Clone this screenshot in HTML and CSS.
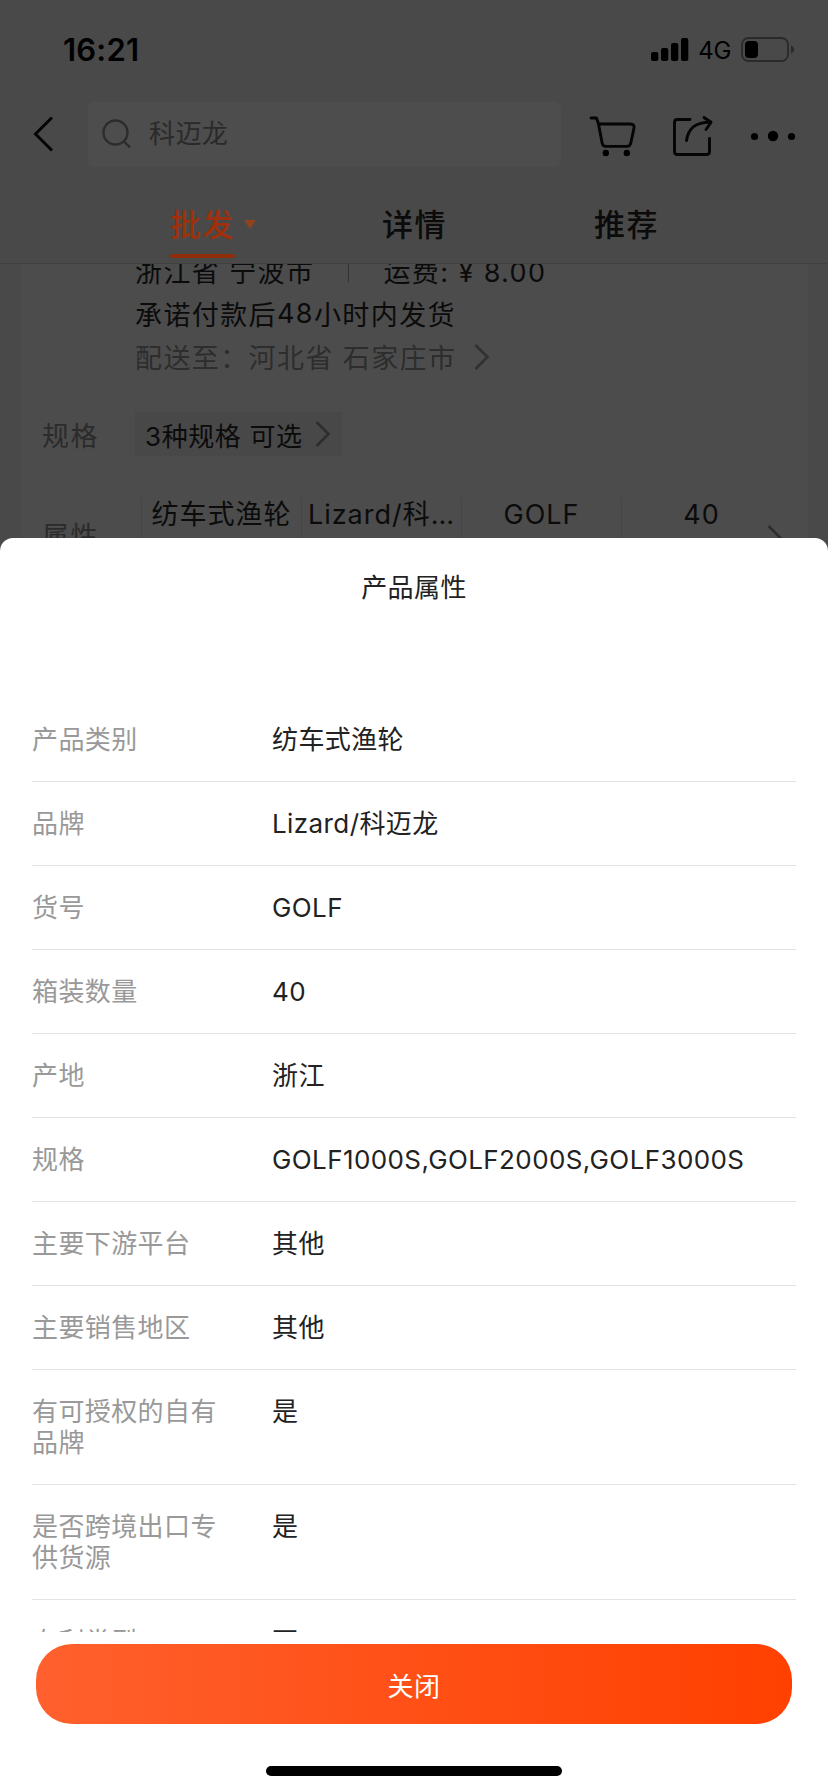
FILE: index.html
```html
<!DOCTYPE html>
<html lang="zh-CN">
<head>
<meta charset="utf-8">
<title>产品属性</title>
<link rel="stylesheet" href="styles.css">
</head>
<body>
<div class="screen">
  <header class="header">
    <div class="status">
      <span class="time">16:21</span>
      <svg class="signal" width="38" height="24" viewBox="0 0 38 24"><rect x="0" y="14" width="7.3" height="9" rx="2"/><rect x="10" y="10" width="7.3" height="13" rx="2"/><rect x="20" y="5" width="7.3" height="18" rx="2"/><rect x="30" y="0" width="7.3" height="23" rx="2"/></svg>
      <span class="net">4G</span>
      <svg class="battery" width="54" height="26" viewBox="0 0 54 26"><rect x="1" y="1" width="46" height="23" rx="6.5" fill="none" stroke="#2a2a2a" stroke-width="1.8"/><rect x="4" y="4" width="13" height="17" rx="4"/><path d="M50 8.5v8c4-1.500 4-6.500 0-8z" fill="#2a2a2a"/></svg>
    </div>
    <div class="nav">
      <svg class="back" width="24" height="38" viewBox="0 0 24 38"><path d="M20 2.500 3.500 19 20 35.500" fill="none" stroke="#050505" stroke-width="3"/></svg>
      <div class="search">
        <svg width="30" height="30" viewBox="0 0 30 30"><g fill="none" stroke="#2c2c2c" stroke-width="2.400"><circle cx="13.500" cy="13.500" r="12"/><path d="m21.500 22 6.500 6.500"/></g></svg>
        <span>科迈龙</span>
      </div>
      <svg class="tools" width="216" height="50" viewBox="0 0 216 50">
        <g fill="none" stroke="#050505" stroke-width="2.900" stroke-linecap="round" stroke-linejoin="round">
          <path d="M4 9h5.500l2 6 3.600 19q.6 3.400 4 3.400h20.700q3.400 0 4-3.400L47 19q.6-4-3.400-4H11.500"/>
          <path d="M103 10.500H90.500q-3 0-3 3v29q0 3 3 3h29q3 0 3-3V29.500"/>
          <path d="M99.500 31.500c2-13 9-18 24-18.500"/>
          <path d="m117 8.500 7 4.800-5 7.200"/>
        </g>
        <circle cx="18.800" cy="44" r="3.200"/><circle cx="39.800" cy="44" r="3.200"/>
        <circle cx="167.500" cy="27.500" r="3.600"/><circle cx="186" cy="27" r="5.200"/><circle cx="204.500" cy="27.500" r="3.600"/>
      </svg>
    </div>
    <nav class="tabs">
      <div class="tab active"><span>批发</span><i class="caret"></i></div>
      <div class="tab"><span>详情</span></div>
      <div class="tab"><span>推荐</span></div>
    </nav>
  </header>
  <main class="content">
    <section class="card">
      <div class="ship">
        <div class="line origin"><span>浙江省 宁波市</span><i class="sep"></i><span>运费: ¥ <b class="price">8.00</b></span></div>
        <div class="line promise">承诺付款后<b>48</b>小时内发货</div>
        <div class="line dest"><span>配送至：河北省 石家庄市</span><svg width="16" height="28" viewBox="0 0 16 28"><path d="m1.500 2 12 12-12 12" fill="none" stroke="#303030" stroke-width="2.500"/></svg></div>
      </div>
      <div class="spec">
        <span class="label">规格</span>
        <div class="chip"><span><b>3</b>种规格 可选</span><svg width="16" height="28" viewBox="0 0 16 28"><path d="m1.500 2 12 12-12 12" fill="none" stroke="#2d2d2d" stroke-width="2.500"/></svg></div>
      </div>
      <div class="attrs">
        <span class="label">属性</span>
        <div class="cells"><span>纺车式渔轮</span><span><b>Lizard/</b>科…</span><span class="latin">GOLF</span><span class="latin">40</span></div>
        <svg class="more" width="16" height="28" viewBox="0 0 16 28"><path d="m1.500 2 12 12-12 12" fill="none" stroke="#2d2d2d" stroke-width="2.500"/></svg>
      </div>
    </section>
  </main>
  <section class="sheet">
    <h1>产品属性</h1>
    <dl class="list">
      <div class="row"><dt>产品类别</dt><dd>纺车式渔轮</dd></div>
      <div class="row"><dt>品牌</dt><dd><span class="latin brand">Lizard/</span>科迈龙</dd></div>
      <div class="row"><dt>货号</dt><dd class="latin">GOLF</dd></div>
      <div class="row"><dt>箱装数量</dt><dd class="latin">40</dd></div>
      <div class="row"><dt>产地</dt><dd>浙江</dd></div>
      <div class="row"><dt>规格</dt><dd class="latin">GOLF1000S,GOLF2000S,GOLF3000S</dd></div>
      <div class="row"><dt>主要下游平台</dt><dd>其他</dd></div>
      <div class="row"><dt>主要销售地区</dt><dd>其他</dd></div>
      <div class="row"><dt>有可授权的自有品牌</dt><dd>是</dd></div>
      <div class="row"><dt>是否跨境出口专供货源</dt><dd>是</dd></div>
      <div class="row"><dt>专利类型</dt><dd>否</dd></div>
    </dl>
    <button class="close" type="button">关闭</button>
    <div class="home"></div>
  </section>
</div>
</body>
</html>
```
FILE: styles.css
```css
* { box-sizing: border-box; }
body { margin: 0; font-family: Inter, "Noto Sans CJK SC", sans-serif; }
b { font-weight: 400; }
svg { display: block; flex: none; }
.screen { width: 828px; height: 1792px; overflow: hidden; display: flex; flex-direction: column; background: #494949; color: #0b0b0b; }

.header { flex: none; height: 264px; background: #494949; border-bottom: 1px solid #414141; }
.status { display: flex; align-items: center; height: 100px; padding: 0 33px 0 63px; }
.time { flex: 1; font-size: 31px; font-weight: 600; line-height: 40px; letter-spacing: .2px; color: #000; }
.net { margin: 2px 10px 0 9px; font-size: 24px; line-height: 30px; color: #000; letter-spacing: -.3px; }
.nav { display: flex; align-items: center; height: 66px; margin-top: 1px; padding-left: 32px; }
.search { display: flex; align-items: center; gap: 17px; width: 473px; height: 65px; margin: 0 26px 0 32px; padding-left: 14px; border-radius: 6px; background: #4d4d4d; font-size: 26px; letter-spacing: .4px; color: #2a2a2a; }
.search span { line-height: 30px; }
.tabs { display: flex; height: 96px; padding: 0 64px 0 97px; margin-left: 0; }
.tab { position: relative; width: 212px; padding: 38px 0 0 73px; font-size: 31px; line-height: 40px; font-weight: 500; letter-spacing: 1.5px; height: 92px; white-space: nowrap; }
.active { color: #9f300b; }
.active::after { content: ""; position: absolute; left: 73px; bottom: 1px; width: 65px; height: 4px; border-radius: 2px; background: #8f2c0a; }
.caret { position: absolute; left: 147px; top: 53px; border: 6px solid transparent; border-top: 9px solid #8f4420; border-bottom: 0; }

.content { flex: none; height: 274px; overflow: hidden; padding: 0 20px 0 22px; }
.card { height: 300px; padding-left: 20px; background: #4c4c4c; }
.ship { padding-left: 93px; font-size: 27px; letter-spacing: 1.4px; }
.line { display: flex; align-items: center; height: 43px; white-space: nowrap; }
.origin { margin-top: -15px; }
.sep { width: 1px; height: 22px; margin: 0 34px 0 34px; background: #333; }
.dest { color: #2d2d2d; gap: 18px; }
.spec { display: flex; align-items: center; margin-top: 34px; height: 44px; }
.label { width: 93px; font-size: 27px; letter-spacing: 1.4px; color: #2b2b2b; flex: none; }
.chip { display: flex; align-items: center; gap: 12px; width: 207px; height: 44px; padding-left: 10px; background: #484848; font-size: 26px; letter-spacing: .6px; white-space: nowrap; }
.attrs { display: flex; padding-top: 42px; }
.attrs .label { padding-top: 17px; line-height: 44px; }
.cells { display: grid; grid-template-columns: repeat(4, 160px); padding-left: 6px; font-size: 27px; letter-spacing: 1px; text-align: center; }
.cells span { height: 60px; line-height: 34px; border-left: 1px solid #454545; white-space: nowrap; }
.more { margin: 26px 0 0 -14px; }

.sheet { flex: 1; min-height: 0; display: flex; flex-direction: column; background: #fff; border-radius: 13px 13px 0 0; color: #222; box-shadow: 0 14px 0 14px #494949; clip-path: none; font-size: 26px; letter-spacing: .4px; }
.sheet { box-shadow: none; }
h1 { flex: none; margin: 0; height: 160px; padding-top: 34px; font-size: 26px; font-weight: 400; line-height: 31px; text-align: center; }
.list { flex: none; margin: 0; height: 934px; padding: 0 32px; overflow: hidden; }
.row { display: flex; padding: 26px 0; border-bottom: 1px solid #e3e3e3; line-height: 31px; }
dt { width: 240px; padding-right: 50px; color: #999; }
dd { margin: 0; white-space: nowrap; }
.close { flex: none; margin: 12px 36px 0; height: 80px; border: 0; border-radius: 36px; background: linear-gradient(90deg, #ff602d, #ff4000); color: #fff; font: inherit; letter-spacing: .4px; }
.home { flex: none; width: 296px; height: 10px; margin: 42px auto 0; border-radius: 5px; background: #000; }
```
